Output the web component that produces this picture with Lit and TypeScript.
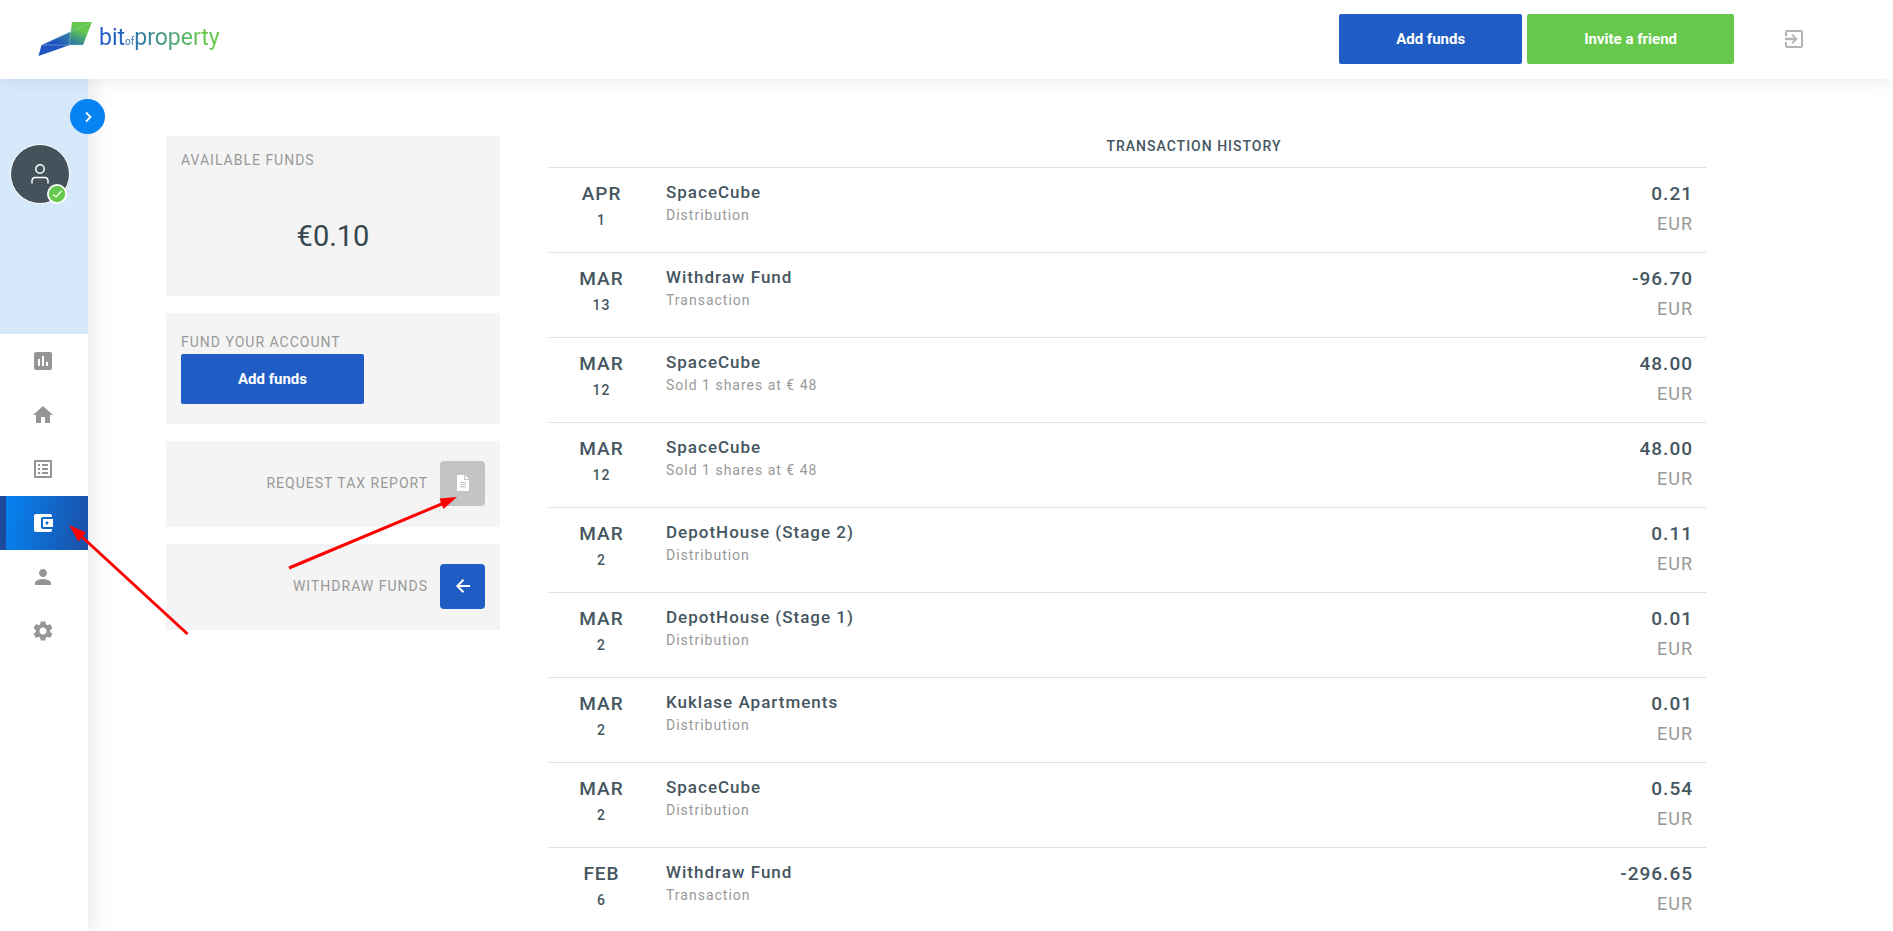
import { LitElement, html, css, svg } from "lit";
import { customElement, property } from "lit/decorators.js";

interface Transaction {
  month: string;
  day: number;
  title: string;
  note: string;
  amount: string;
}

const transactions: Transaction[] = [
  { month: "APR", day: 1, title: "SpaceCube", note: "Distribution", amount: "0.21" },
  { month: "MAR", day: 13, title: "Withdraw Fund", note: "Transaction", amount: "-96.70" },
  { month: "MAR", day: 12, title: "SpaceCube", note: "Sold 1 shares at € 48", amount: "48.00" },
  { month: "MAR", day: 12, title: "SpaceCube", note: "Sold 1 shares at € 48", amount: "48.00" },
  { month: "MAR", day: 2, title: "DepotHouse (Stage 2)", note: "Distribution", amount: "0.11" },
  { month: "MAR", day: 2, title: "DepotHouse (Stage 1)", note: "Distribution", amount: "0.01" },
  { month: "MAR", day: 2, title: "Kuklase Apartments", note: "Distribution", amount: "0.01" },
  { month: "MAR", day: 2, title: "SpaceCube", note: "Distribution", amount: "0.54" },
  { month: "FEB", day: 6, title: "Withdraw Fund", note: "Transaction", amount: "-296.65" },
];

const icons = {
  chart: svg`<path d="M19 3H5c-1.1 0-2 .9-2 2v14c0 1.1.9 2 2 2h14c1.1 0 2-.9 2-2V5c0-1.1-.9-2-2-2zM9 17H7v-7h2v7zm4 0h-2V7h2v10zm4 0h-2v-4h2v4z"/>`,
  home: svg`<path d="M10 20v-6h4v6h5v-8h3L12 3 2 12h3v8z"/>`,
  list: svg`<path d="M19 5v14H5V5h14m1.1-2H3.9c-.5 0-.9.4-.9.9v16.2c0 .4.4.9.9.9h16.2c.4 0 .9-.5.9-.9V3.9c0-.5-.5-.9-.9-.9zM11 7h6v2h-6V7zm0 4h6v2h-6v-2zm0 4h6v2h-6zM7 7h2v2H7zm0 4h2v2H7zm0 4h2v2H7z"/>`,
  wallet: svg`<path d="M21 18v1c0 1.1-.9 2-2 2H5c-1.11 0-2-.9-2-2V5c0-1.1.89-2 2-2h14c1.1 0 2 .9 2 2v1h-9c-1.11 0-2 .9-2 2v8c0 1.1.89 2 2 2h9zm-9-2h10V8H12v8zm4-2.5c-.83 0-1.5-.67-1.5-1.5s.67-1.5 1.5-1.5 1.5.67 1.5 1.5-.67 1.5-1.5 1.5z"/>`,
  person: svg`<path d="M12 12c2.21 0 4-1.79 4-4s-1.79-4-4-4-4 1.79-4 4 1.79 4 4 4zm0 2c-2.67 0-8 1.34-8 4v2h16v-2c0-2.66-5.33-4-8-4z"/>`,
  gear: svg`<path d="M19.14 12.94c.04-.3.06-.61.06-.94 0-.32-.02-.64-.07-.94l2.03-1.58c.18-.14.23-.41.12-.61l-1.92-3.32c-.12-.22-.37-.29-.59-.22l-2.39.96c-.5-.38-1.03-.7-1.62-.94l-.36-2.54c-.04-.24-.24-.41-.48-.41h-3.84c-.24 0-.43.17-.47.41l-.36 2.54c-.59.24-1.13.57-1.62.94l-2.39-.96c-.22-.08-.47 0-.59.22L2.74 8.87c-.12.21-.08.47.12.61l2.03 1.58c-.05.3-.09.63-.09.94s.02.64.07.94l-2.03 1.58c-.18.14-.23.41-.12.61l1.92 3.32c.12.22.37.29.59.22l2.39-.96c.5.38 1.03.7 1.62.94l.36 2.54c.05.24.24.41.48.41h3.84c.24 0 .44-.17.47-.41l.36-2.54c.59-.24 1.13-.56 1.62-.94l2.39.96c.22.08.47 0 .59-.22l1.92-3.32c.12-.22.07-.47-.12-.61l-2.01-1.58zM12 15.6c-1.98 0-3.6-1.62-3.6-3.6s1.62-3.6 3.6-3.6 3.6 1.62 3.6 3.6-1.62 3.6-3.6 3.6z"/>`,
};

const navItems: { label: string; icon: keyof typeof icons; active?: boolean }[] = [
  { label: "Dashboard", icon: "chart" },
  { label: "Properties", icon: "home" },
  { label: "Orders", icon: "list" },
  { label: "Wallet", icon: "wallet", active: true },
  { label: "Profile", icon: "person" },
  { label: "Settings", icon: "gear" },
];

const buttonStyles = css`
  button {
    border: 0;
    padding: 0;
    margin: 0;
    font-family: inherit;
    cursor: pointer;
  }
  .btn {
    height: 50px;
    border-radius: 2px;
    background: #1f5dc4;
    color: #fff;
    font-size: 15px;
    font-weight: 700;
    line-height: 48px;
    padding: 0 57px;
  }
  .btn.green {
    background: #66c94d;
  }
`;

@customElement("top-bar")
class TopBar extends LitElement {
  static styles = [
    buttonStyles,
    css`
      :host {
        display: block;
      }
      .bar {
        display: flex;
        align-items: center;
        justify-content: space-between;
        height: 79px;
        padding: 0 84px 2px 38px;
        background: #fff;
        box-shadow: 0 0 18px rgba(0, 0, 0, 0.1);
        box-sizing: border-box;
      }
      .brand {
        display: flex;
        align-items: center;
        gap: 7px;
        text-decoration: none;
        font-size: 23px;
        line-height: 30px;
      }
      .word {
        padding-top: 3px;
        background: linear-gradient(90deg, #1f5dc4 15%, #66c94d 85%);
        -webkit-background-clip: text;
        background-clip: text;
        color: transparent;
      }
      .of {
        font-size: 10px;
      }
      .actions {
        display: flex;
        align-items: center;
        gap: 5px;
      }
      .exit {
        display: flex;
        margin-left: 40px;
        background: none;
      }
    `,
  ];

  render() {
    return html`
      <header class="bar">
        <a class="brand" href="#" aria-label="bit of property">
          <svg width="54" height="34" viewBox="0 0 54 34" aria-hidden="true">
            <defs>
              <linearGradient id="wing" x1="0.2" y1="0.9" x2="0.9" y2="0.2">
                <stop offset="0.3" stop-color="#1f55c0" />
                <stop offset="0.7" stop-color="#36849a" />
                <stop offset="1" stop-color="#66c94d" />
              </linearGradient>
              <linearGradient id="roof" x1="0.25" y1="1" x2="0.6" y2="0.1">
                <stop offset="0" stop-color="#2a78a8" />
                <stop offset="0.75" stop-color="#66c94d" />
              </linearGradient>
            </defs>
            <path d="M3.500 23 53.500 0 32 23 0.500 34z" fill="url(#wing)" />
            <path d="M34 0H54L45 23H31z" fill="url(#roof)" />
            <path d="M3.500 23H45M3.500 23 53.500 0.500M34 0 31 23" stroke="#b5d8df" stroke-width="0.400" fill="none" />
          </svg>
          <span class="word">bit<span class="of">of</span>property</span>
        </a>
        <div class="actions">
          <button class="btn" type="button">Add funds</button>
          <button class="btn green" type="button">Invite a friend</button>
          <button class="exit" type="button" aria-label="Log out">
            <svg width="30" height="24" viewBox="0 0 30 24" fill="#b4b4b4" aria-hidden="true">
              <path transform="translate(3 0)" d="M6.500 13.200V10.800H11.800L9.300 8.300 10.700 6.900 15.700 12 10.700 17.100 9.300 15.700 11.800 13.200zM3 15h2v4h14V5H5v4H3V5c0-1.100.9-2 2-2h14c1.100 0 2 .9 2 2v14c0 1.100-.9 2-2 2H5c-1.100 0-2-.9-2-2zM3 10.800h5v2.400H3z" />
            </svg>
          </button>
        </div>
      </header>
    `;
  }
}

@customElement("side-bar")
class SideBar extends LitElement {
  static styles = [
    buttonStyles,
    css`
      :host {
        display: block;
        width: 88px;
        flex: none;
        background: #fff;
        box-shadow: 2px 0 22px rgba(0, 0, 0, 0.12);
      }
      .user {
        position: relative;
        height: 255px;
        background: #d6e9fa;
        box-sizing: border-box;
        padding: 65px 0 0 10px;
      }
      .avatar {
        position: relative;
        display: flex;
        align-items: center;
        justify-content: center;
        width: 60px;
        height: 60px;
        box-sizing: border-box;
        border: 1px solid #fff;
        border-radius: 50%;
        background: #44525b;
      }
      .badge {
        position: absolute;
        right: 2px;
        bottom: -1px;
        width: 20px;
        height: 20px;
      }
      .toggle {
        position: absolute;
        left: 70px;
        top: 20px;
        display: flex;
        align-items: center;
        justify-content: center;
        width: 35px;
        height: 35px;
        border-radius: 50%;
        background: #0583f2;
      }
      .item {
        display: flex;
        align-items: center;
        justify-content: center;
        height: 54px;
        padding-right: 2px;
        fill: #959595;
      }
      .item.active {
        padding-right: 8px;
        border-left: 6px solid #1e4a9d;
        background: linear-gradient(100deg, #0583f2, #1c4fa5);
        fill: #fff;
      }
    `,
  ];

  render() {
    return html`
      <div class="user">
        <div class="avatar">
          <svg width="18" height="20" viewBox="0 0 18 20" fill="none" stroke="#fff" stroke-width="1.500" aria-hidden="true">
            <circle cx="9" cy="5" r="4.200" />
            <path d="M1 19.500V17Q1 13.500 4.500 13.500H13.500Q17 13.500 17 17V19.500" />
          </svg>
          <svg class="badge" viewBox="0 0 20 20" aria-hidden="true">
            <circle cx="10" cy="10" r="10" fill="#fff" />
            <circle cx="10" cy="10" r="8.200" fill="#66c94d" />
            <path d="M6 10.500 9 13 14.500 7" fill="none" stroke="#fff" stroke-width="1.200" />
          </svg>
        </div>
        <button class="toggle" type="button" aria-label="Expand menu">
          <svg width="12" height="12" viewBox="0 0 12 12" fill="none" stroke="#fff" stroke-width="1.800" aria-hidden="true">
            <path d="M4 1.500 8.500 6 4 10.500" />
          </svg>
        </button>
      </div>
      <nav>
        ${navItems.map(
          (item) => html`
            <a class="item ${item.active ? "active" : ""}" href="#" aria-label=${item.label}>
              <svg width="24" height="24" viewBox="0 0 24 24" aria-hidden="true">${icons[item.icon]}</svg>
            </a>
          `,
        )}
      </nav>
    `;
  }
}

@customElement("funds-panel")
class FundsPanel extends LitElement {
  static styles = [
    buttonStyles,
    css`
      :host {
        display: flex;
        flex-direction: column;
        gap: 17px;
      }
      .card {
        background: #f4f4f4;
        padding: 18px 15px 20px;
        box-sizing: border-box;
      }
      .label {
        margin: 0 0 1px;
        font-size: 14px;
        font-weight: 400;
        line-height: 22px;
        letter-spacing: 1px;
        color: #999;
      }
      .balance {
        padding: 13px 15px 33px;
      }
      .sum {
        margin: 39px 0 0;
        text-align: center;
        font-size: 29px;
        font-weight: 400;
        line-height: 53px;
        color: #37474f;
      }
      .action {
        display: flex;
        align-items: center;
        justify-content: flex-end;
        height: 86px;
        gap: 12px;
      }
      .square {
        display: flex;
        align-items: center;
        justify-content: center;
        width: 45px;
        height: 45px;
        border-radius: 4px;
        background: #1f5dc4;
      }
      .square.muted {
        background: #c4c4c4;
      }
    `,
  ];

  render() {
    return html`
      <section class="card balance">
        <h2 class="label">AVAILABLE FUNDS</h2>
        <p class="sum">€0.10</p>
      </section>
      <section class="card">
        <h2 class="label">FUND YOUR ACCOUNT</h2>
        <button class="btn" type="button">Add funds</button>
      </section>
      <section class="card action">
        <label class="label" for="report">REQUEST TAX REPORT</label>
        <button class="square muted" id="report" type="button">
          <svg width="12" height="16" viewBox="0 0 12 16" aria-hidden="true">
            <path d="M0 0H7V5H12V16H0z" fill="#fff" />
            <path d="M8 0 12 4H8z" fill="#fff" />
            <path d="M3 7.500H9M3 9.700H9M3 11.900H9" stroke="#c4c4c4" />
          </svg>
        </button>
      </section>
      <section class="card action">
        <label class="label" for="withdraw">WITHDRAW FUNDS</label>
        <button class="square" id="withdraw" type="button">
          <svg width="14" height="14" viewBox="0 0 14 14" fill="none" stroke="#fff" stroke-width="2" aria-hidden="true">
            <path d="M14 7H1.500M7.500 0.800 1.300 7 7.500 13.200" />
          </svg>
        </button>
      </section>
    `;
  }
}

@customElement("transaction-table")
class TransactionTable extends LitElement {
  @property({ attribute: false }) rows: Transaction[] = [];

  static styles = css`
    :host {
      display: block;
    }
    table {
      width: 100%;
      border-collapse: separate;
      border-spacing: 0;
      letter-spacing: 1px;
      color: #455660;
    }
    th,
    td {
      padding: 0 12px;
      vertical-align: top;
    }
    .heading {
      height: 31px;
      padding: 0 0 0 28px;
      font-size: 14px;
      font-weight: 500;
      line-height: 20px;
      text-align: center;
    }
    td {
      height: 85px;
      padding-top: 12px;
      border-top: 1px solid #dee0e6;
      box-sizing: border-box;
    }
    .date {
      width: 105px;
      text-align: center;
    }
    .month,
    .amount {
      font-size: 19px;
      font-weight: 500;
      line-height: 28px;
    }
    .day {
      font-size: 14px;
      font-weight: 500;
      line-height: 24px;
    }
    .title {
      font-size: 17px;
      font-weight: 500;
      line-height: 24px;
    }
    .note {
      font-size: 14px;
      font-weight: 400;
      line-height: 22px;
      color: #999;
    }
    .value {
      padding-right: 13px;
      text-align: right;
    }
    .currency {
      font-size: 18px;
      font-weight: 400;
      line-height: 32px;
      color: #999;
    }
  `;

  render() {
    return html`
      <table>
        <thead>
          <tr>
            <th></th>
            <th class="heading" colspan="2">TRANSACTION HISTORY</th>
          </tr>
        </thead>
        <tbody>
          ${this.rows.map(
            (row) => html`
              <tr>
                <td class="date">
                  <div class="month">${row.month}</div>
                  <div class="day">${row.day}</div>
                </td>
                <td>
                  <div class="title">${row.title}</div>
                  <div class="note">${row.note}</div>
                </td>
                <td class="value">
                  <div class="amount">${row.amount}</div>
                  <div class="currency">EUR</div>
                </td>
              </tr>
            `,
          )}
        </tbody>
      </table>
    `;
  }
}

@customElement("app-root")
class AppRoot extends LitElement {
  static styles = css`
    :host {
      position: relative;
      display: flex;
      flex-direction: column;
      height: 100vh;
      overflow: hidden;
      background: #fff;
      font-family: Roboto, "Noto Sans", sans-serif;
    }
    top-bar {
      position: relative;
      z-index: 2;
    }
    .body {
      display: flex;
      flex: 1;
      min-height: 0;
    }
    side-bar {
      position: relative;
      z-index: 1;
    }
    main {
      display: grid;
      flex: 1;
      grid-template-columns: minmax(0, 334fr) minmax(0, 1157fr);
      gap: 49px;
      align-items: start;
      padding: 57px 187px 0 78px;
      overflow-y: auto;
      scrollbar-width: none;
    }
    .marks {
      position: absolute;
      left: 0;
      top: 0;
      z-index: 3;
      pointer-events: none;
    }
  `;

  render() {
    return html`
      <top-bar></top-bar>
      <div class="body">
        <side-bar></side-bar>
        <main>
          <funds-panel></funds-panel>
          <transaction-table .rows=${transactions}></transaction-table>
        </main>
      </div>
      <svg class="marks" width="500" height="660" viewBox="0 0 500 660" fill="#f00" stroke="#f00" aria-hidden="true">
        <path d="M187.500 634 80 535M289 568 444 503" stroke-width="3" />
        <path d="M69 525 86 532.500 78.500 541.500zM457 497 439.500 498.500 443.500 509z" stroke="none" />
      </svg>
    `;
  }
}
